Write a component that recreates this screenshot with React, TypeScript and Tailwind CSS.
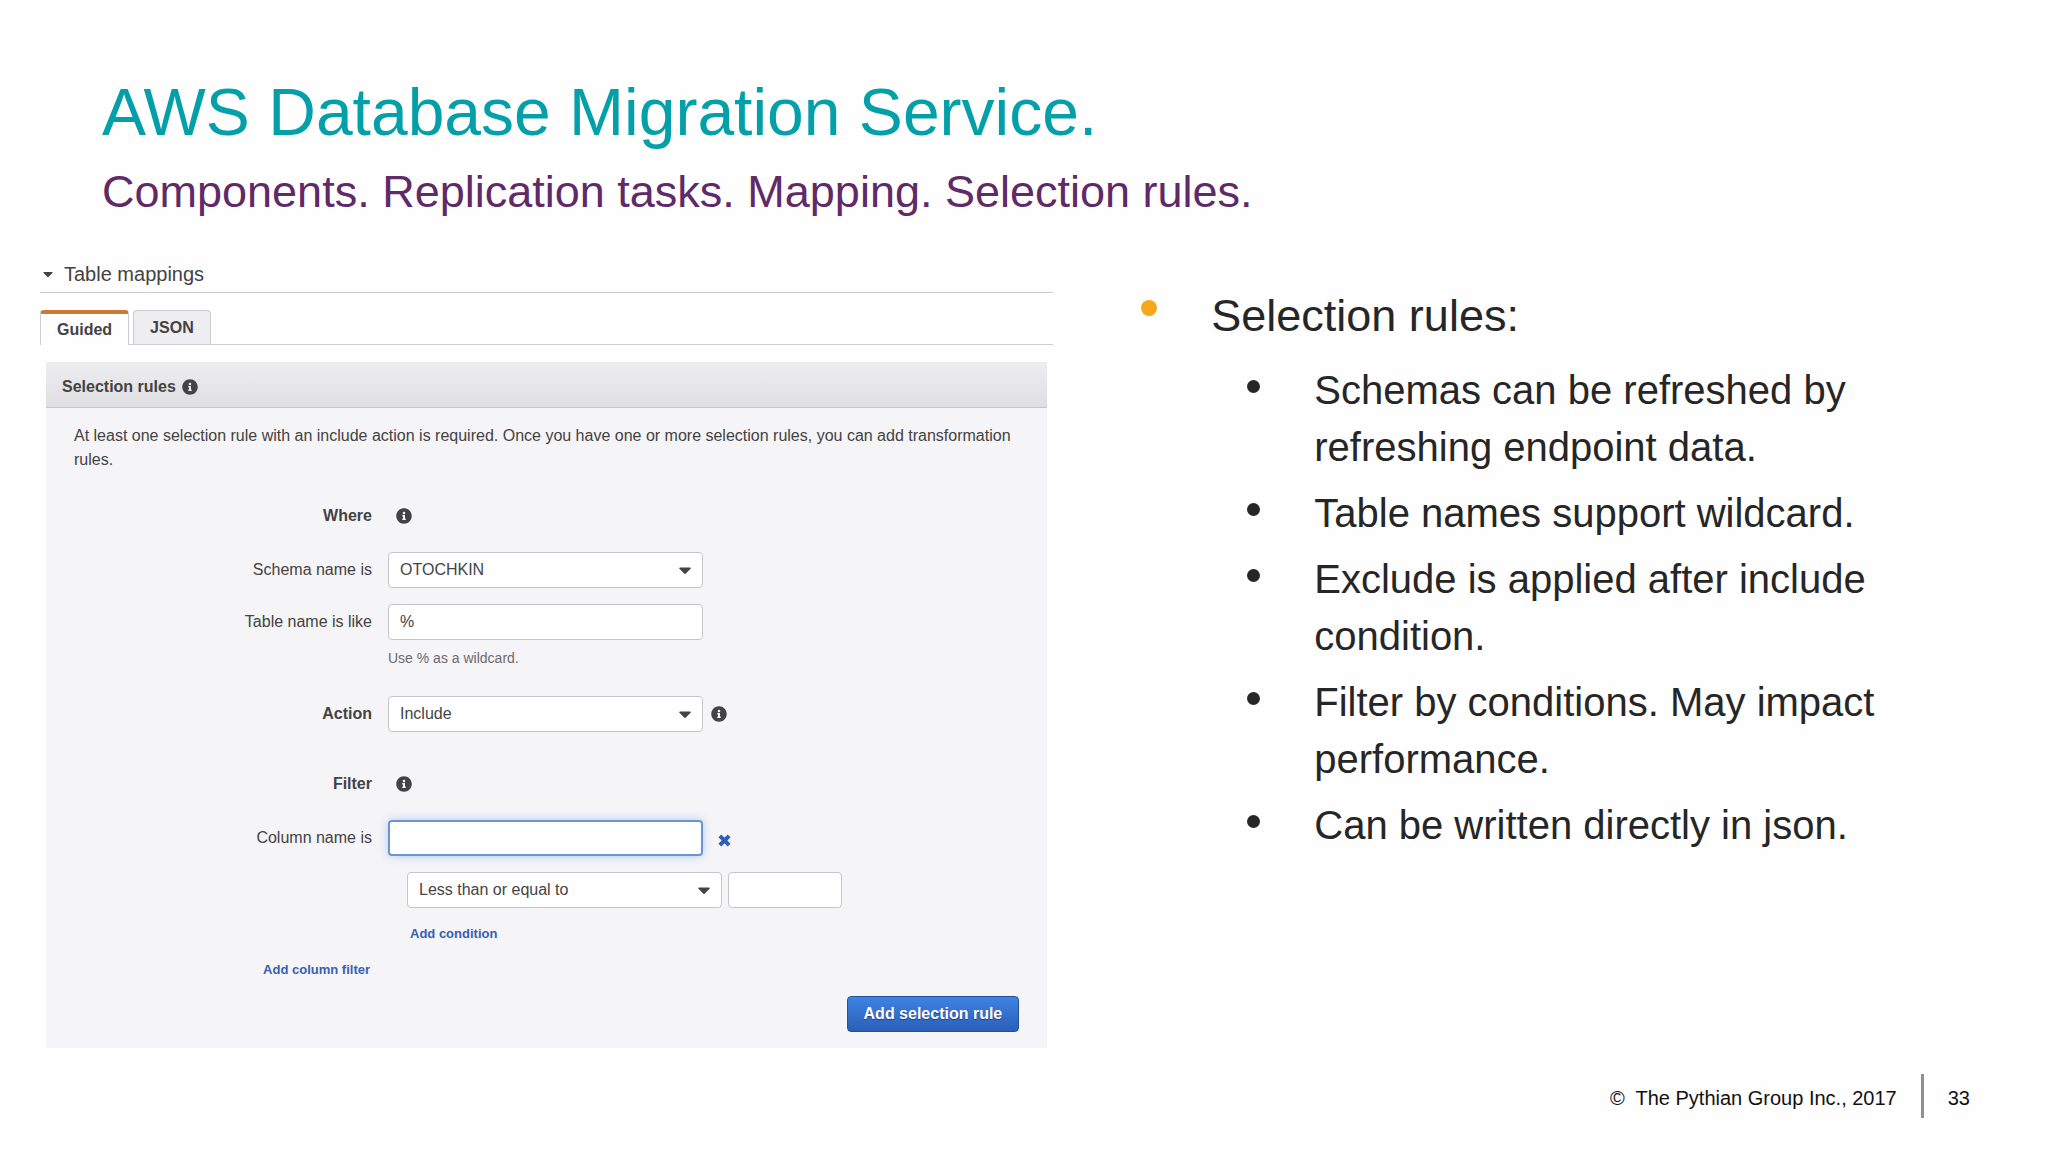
import { useState } from "react";
import type { ReactNode } from "react";
import { FaCaretDown, FaInfoCircle } from "react-icons/fa";

const POINTS = [
  "Schemas can be refreshed by refreshing endpoint data.",
  "Table names support wildcard.",
  "Exclude is applied after include condition.",
  "Filter by conditions. May impact performance.",
  "Can be written directly in json.",
];

const fieldClass =
  "h-9 w-full rounded-[4px] border border-[#c6c5ca] bg-white px-[11px] text-[16px] text-[#444] outline-none";

function InfoButton({ label }: { label: string }) {
  return (
    <button type="button" aria-label={label} className="flex text-[#434244]">
      <FaInfoCircle className="size-4" />
    </button>
  );
}

function RemoveIcon() {
  return (
    <svg viewBox="0 0 14 14" className="size-[13px]" aria-hidden="true">
      <path d="M2 2l10 10M12 2L2 12" stroke="#2f5fb3" strokeWidth="4.4" />
    </svg>
  );
}

function Select({ id, label, options }: { id: string; label?: string; options: string[] }) {
  return (
    <div className="relative w-[315px]">
      <select id={id} aria-label={label} className={`${fieldClass} appearance-none`}>
        {options.map((option) => (
          <option key={option}>{option}</option>
        ))}
      </select>
      <FaCaretDown className="pointer-events-none absolute top-2 right-2 size-5 text-[#434244]" />
    </div>
  );
}

function Row({ label, children }: { label: ReactNode; children: ReactNode }) {
  return (
    <div className="grid grid-cols-[326px_1fr] items-center gap-x-4">
      <div className="text-right">{label}</div>
      <div className="flex items-center">{children}</div>
    </div>
  );
}

function MappingForm() {
  const [table, setTable] = useState("%");
  const [column, setColumn] = useState("");
  const [value, setValue] = useState("");

  return (
    <section className="mx-1.5 mt-[17px] bg-[#f5f4f6]">
      <div className="flex h-[46px] items-center gap-1.5 border-b border-[#c6c5c9] bg-linear-to-b from-[#eeedef] to-[#dfdee0] px-4 pt-1">
        <h3 className="text-[16px] font-bold">Selection rules</h3>
        <InfoButton label="About selection rules" />
      </div>
      <form className="pt-4 pb-4 text-[16px] leading-6" onSubmit={(e) => e.preventDefault()}>
        <p className="px-7">
          At least one selection rule with an include action is required. Once you have one or more selection
          rules, you can add transformation rules.
        </p>

        {/* Where */}
        <div className="mt-8">
          <Row label={<b>Where</b>}>
            <div className="pl-2">
              <InfoButton label="About where" />
            </div>
          </Row>
        </div>
        <div className="mt-6">
          <Row label={<label htmlFor="schema">Schema name is</label>}>
            <Select id="schema" options={["OTOCHKIN"]} />
          </Row>
        </div>
        <div className="mt-4">
          <Row label={<label htmlFor="table">Table name is like</label>}>
            <div className="w-[315px]">
              <input id="table" className={fieldClass} value={table} onChange={(e) => setTable(e.target.value)} />
            </div>
          </Row>
        </div>
        <p className="mt-2 pl-[342px] text-[14px] leading-5 text-[#6b6a6d]">Use % as a wildcard.</p>

        {/* Action */}
        <div className="mt-7">
          <Row label={<label htmlFor="action" className="font-bold">Action</label>}>
            <Select id="action" options={["Include", "Exclude"]} />
            <div className="pl-2">
              <InfoButton label="About action" />
            </div>
          </Row>
        </div>

        {/* Filter */}
        <div className="mt-10">
          <Row label={<b>Filter</b>}>
            <div className="pl-2">
              <InfoButton label="About filter" />
            </div>
          </Row>
        </div>
        <div className="mt-6">
          <Row label={<label htmlFor="column">Column name is</label>}>
            <div className="w-[315px]">
              <input
                id="column"
                className="h-9 w-full rounded-[4px] border-2 border-[#6f93d2] bg-white px-[10px] text-[16px] shadow-[0_0_8px_#a9cbf3] outline-none"
                value={column}
                onChange={(e) => setColumn(e.target.value)}
              />
            </div>
            <button type="button" aria-label="Remove column filter" className="pt-1 pl-[15px]">
              <RemoveIcon />
            </button>
          </Row>
        </div>
        <div className="mt-4 flex gap-1.5 pl-[361px]">
          <Select id="operator" label="Operator" options={["Less than or equal to", "Equal to", "Greater than or equal to"]} />
          <div className="w-[114px]">
            <input aria-label="Value" className={fieldClass} value={value} onChange={(e) => setValue(e.target.value)} />
          </div>
        </div>
        <div className="mt-4 flex pl-[364px] text-[13px] leading-5 font-bold text-[#3560b4]">
          <button type="button">Add condition</button>
        </div>
        <div className="mt-4 flex w-[324px] justify-end text-[13px] leading-5 font-bold text-[#3560b4]">
          <button type="button">Add column filter</button>
        </div>
        <div className="mt-4 flex justify-end pr-7">
          <button
            type="submit"
            className="h-9 rounded-[4px] border border-[#244f9c] bg-linear-to-b from-[#3f83e3] to-[#2a5fb9] px-4 font-bold text-white text-shadow-[0_1px_1px_#1d3f7c]"
          >
            Add selection rule
          </button>
        </div>
      </form>
    </section>
  );
}

export default function App() {
  const [tab, setTab] = useState("Guided");

  return (
    <div className="flex min-h-screen flex-col bg-[#fefefe] font-['Liberation_Sans',Arial,sans-serif]">
      <header className="px-[102px] pt-[76px]">
        <h1 className="text-[66px] leading-[72px] text-[#04a0aa]">AWS Database Migration Service.</h1>
        <p className="mt-4 text-[45px] leading-[56px] text-[#5f2a67]">
          Components. Replication tasks. Mapping. Selection rules.
        </p>
      </header>

      <main className="grid grid-cols-[18fr_17fr] pt-10">
        <div className="pl-10 text-[#434244]">
          <h2 className="border-b border-[#cdccd0] pb-1 text-[20px] leading-7">
            <button type="button" aria-expanded="true" className="flex items-center gap-2">
              <FaCaretDown className="size-4" />
              Table mappings
            </button>
          </h2>
          <div role="tablist" className="mt-[17px] flex gap-1 border-b border-[#cdccd0]">
            {["Guided", "JSON"].map((name) => (
              <button
                key={name}
                type="button"
                role="tab"
                aria-selected={tab === name}
                onClick={() => setTab(name)}
                className={
                  tab === name
                    ? "-mb-px h-[35px] rounded-t-[4px] border-x border-t-4 border-x-[#cdccd0] border-t-[#cf7a33] bg-[#fefefe] px-4 text-[16px] font-bold"
                    : "h-[34px] rounded-t-[4px] border border-b-0 border-[#cdccd0] bg-[#eeedef] px-4 text-[16px] font-bold"
                }
              >
                {name}
              </button>
            ))}
          </div>
          <MappingForm />
        </div>

        <ul className="pt-7 pr-32 pl-[88px] text-[#262626]">
          <li>
            <div className="flex gap-[54px]">
              <span className="mt-3 size-4 shrink-0 rounded-full bg-[#f6a71c]" />
              <span className="text-[45px] leading-[56px]">Selection rules:</span>
            </div>
            <ul className="mt-[18px] flex flex-col gap-[9px] pl-[106px]">
              {POINTS.map((point) => (
                <li key={point} className="flex gap-[54px]">
                  <span className="mt-[18px] size-[13px] shrink-0 rounded-full bg-[#262626]" />
                  <span className="text-[40px] leading-[57px]">{point}</span>
                </li>
              ))}
            </ul>
          </li>
        </ul>
      </main>

      <footer className="mt-[26px] flex items-center justify-end gap-6 pr-[78px] text-[20px] text-[#111]">
        <span className="pt-1 whitespace-pre">©  The Pythian Group Inc., 2017</span>
        <span className="h-11 w-[3px] bg-[#8f8f8f]" />
        <span className="pt-1">33</span>
      </footer>
    </div>
  );
}
